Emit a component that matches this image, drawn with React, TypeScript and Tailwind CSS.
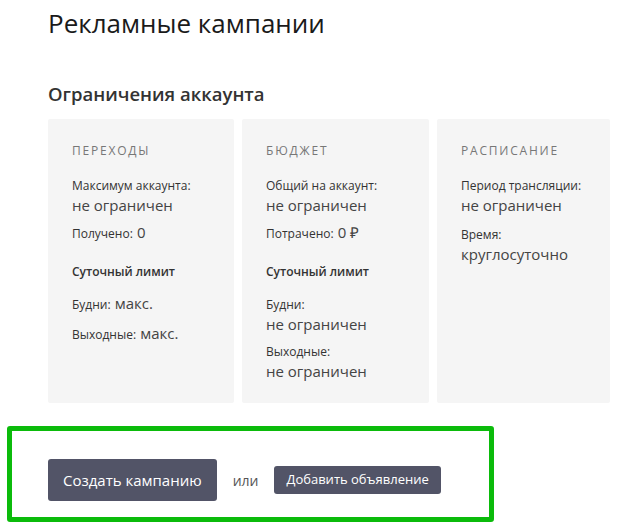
type Item =
  | { kind: 'stack'; label: string; value: string; gap?: string }
  | { kind: 'inline'; label: string; value: string; gap?: string }
  | { kind: 'title'; label: string; gap?: string };

type Card = {
  heading: string;
  width: string;
  items: Item[];
};

const cards: Card[] = [
  {
    heading: 'Переходы',
    width: 'w-[186px]',
    items: [
      { kind: 'stack', label: 'Максимум аккаунта:', value: 'не ограничен' },
      { kind: 'inline', label: 'Получено:', value: '0', gap: 'mt-[9px]' },
      { kind: 'title', label: 'Суточный лимит', gap: 'mt-[19px]' },
      { kind: 'inline', label: 'Будни:', value: 'макс.', gap: 'mt-[12px]' },
      { kind: 'inline', label: 'Выходные:', value: 'макс.', gap: 'mt-[10px]' },
    ],
  },
  {
    heading: 'Бюджет',
    width: 'w-[187px]',
    items: [
      { kind: 'stack', label: 'Общий на аккаунт:', value: 'не ограничен' },
      { kind: 'inline', label: 'Потрачено:', value: '0 ₽', gap: 'mt-[9px]' },
      { kind: 'title', label: 'Суточный лимит', gap: 'mt-[19px]' },
      { kind: 'stack', label: 'Будни:', value: 'не ограничен', gap: 'mt-[13px]' },
      { kind: 'stack', label: 'Выходные:', value: 'не ограничен', gap: 'mt-[9px]' },
    ],
  },
  {
    heading: 'Расписание',
    width: 'w-[173px]',
    items: [
      { kind: 'stack', label: 'Период трансляции:', value: 'не ограничен' },
      { kind: 'stack', label: 'Время:', value: 'круглосуточно', gap: 'mt-[11px]' },
    ],
  },
];

function CardItem({ item }: { item: Item }) {
  const gap = item.gap ?? '';
  if (item.kind === 'title') {
    return <div className={`${gap} text-[12px] leading-[20px] font-semibold text-[#333]`}>{item.label}</div>;
  }
  if (item.kind === 'inline') {
    return (
      <div className={`${gap} leading-[18px] text-[#333]`}>
        <span className="text-[12px]">{item.label}</span>{' '}
        <span className="text-[15px] text-[#444]">{item.value}</span>
      </div>
    );
  }
  return (
    <div className={gap}>
      <div className="text-[12px] leading-[20px] text-[#333]">{item.label}</div>
      <div className="text-[15px] leading-[18px] text-[#444]">{item.value}</div>
    </div>
  );
}

export default function App() {
  return (
    <div className="min-h-[529px] w-[617px] bg-white font-['Open_Sans',sans-serif]">
      <div className="pl-[48px] pt-[5px]">
        <h1 className="text-[26px] leading-[36px] font-normal text-[#1a1a1a]">Рекламные кампании</h1>
        <h2 className="mt-[40px] text-[18.5px] leading-[26px] font-semibold text-[#333]">Ограничения аккаунта</h2>
        <div className="mt-[12px] flex gap-[8px]">
          {cards.map((card) => (
            <div key={card.heading} className={`${card.width} h-[284px] shrink-0 rounded-[2px] bg-[#f5f5f5] pl-[24px] pr-[8px] pt-[22px]`}>
              <div className="text-[12px] leading-[20px] uppercase tracking-[1.8px] text-[#777]">{card.heading}</div>
              <div className="mt-[15px]">
                {card.items.map((item) => (
                  <CardItem key={item.label} item={item} />
                ))}
              </div>
            </div>
          ))}
        </div>
      </div>
      <div className="ml-[7px] mt-[23px] w-[487px] rounded-[3px] border-[5px] border-[#0bbb0b] pl-[36px] pt-[28px] pb-[16px]">
        <div className="flex items-center gap-[16px]">
          <button className="h-[42px] rounded-[3px] bg-[#525467] px-[15px] text-[15px] text-white">Создать кампанию</button>
          <span className="text-[14px] text-[#555]">или</span>
          <button className="h-[28px] rounded-[3px] bg-[#525467] px-[12px] text-[13px] text-white">Добавить объявление</button>
        </div>
      </div>
    </div>
  );
}
